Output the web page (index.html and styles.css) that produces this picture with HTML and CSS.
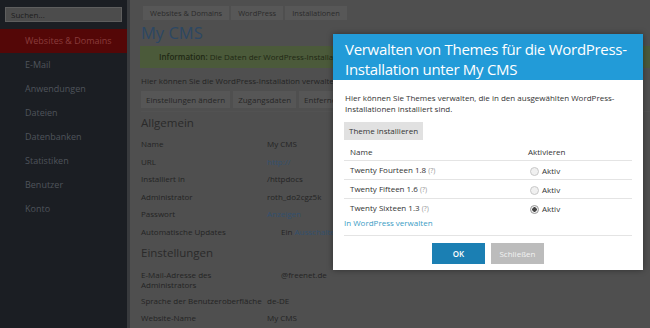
FILE: index.html
```html
<!DOCTYPE html>
<html lang="de">
<head>
  <meta charset="UTF-8">
  <title>My CMS - WordPress</title>
  <link rel="stylesheet" href="styles.css">
</head>
<body>
  <!-- Seitenleiste -->
  <aside class="sidebar">
    <div class="search">Suchen...</div>
    <ul class="nav">
      <li class="active">Websites &amp; Domains</li>
      <li>E-Mail</li>
      <li>Anwendungen</li>
      <li>Dateien</li>
      <li>Datenbanken</li>
      <li>Statistiken</li>
      <li>Benutzer</li>
      <li>Konto</li>
    </ul>
  </aside>

  <!-- Inhalt -->
  <main class="content">
    <div class="crumbs">
      <span>Websites &amp; Domains</span>
      <span>WordPress</span>
      <span>Installationen</span>
    </div>
    <h1 class="page-title">My CMS</h1>
    <div class="info"><b>Information:</b> Die Daten der WordPress-Installation wurden aktualisiert.</div>
    <p class="lead">Hier können Sie die WordPress-Installation verwalten.</p>
    <div class="tools">
      <span>Einstellungen ändern</span>
      <span>Zugangsdaten</span>
      <span>Entfernen</span>
    </div>

    <h2 class="section">Allgemein</h2>
    <div class="props">
      <div class="key">Name</div><div class="val">My CMS</div>
      <div class="key">URL</div><div class="val"><a>http://</a></div>
      <div class="key">Installiert in</div><div class="val">/httpdocs</div>
      <div class="key">Administrator</div><div class="val">roth_do2cgz5k</div>
      <div class="key">Passwort</div><div class="val"><a>Anzeigen</a></div>
      <div class="key">Automatische Updates</div><div class="val shift">Ein <a>Ausschalten</a></div>
    </div>

    <h2 class="section plain">Einstellungen</h2>
    <div class="props wide">
      <div class="key">E-Mail-Adresse des<br>Administrators</div><div class="val shift">@freenet.de</div>
      <div class="key">Sprache der Benutzeroberfläche</div><div class="val">de-DE</div>
      <div class="key">Website-Name</div><div class="val">My CMS</div>
    </div>
  </main>

  <!-- Dialog -->
  <div class="modal">
    <div class="modal-head">Verwalten von Themes für die WordPress-<br>Installation unter My CMS</div>
    <div class="modal-body">
      <p>Hier können Sie Themes verwalten, die in den ausgewählten WordPress-<br>Installationen installiert sind.</p>
      <span class="btn-grey">Theme installieren</span>
      <table class="themes">
        <tr><th>Name</th><th>Aktivieren</th></tr>
        <tr><td>Twenty Fourteen 1.8 <span class="q">(?)</span></td><td><span class="radio"></span>Aktiv</td></tr>
        <tr><td>Twenty Fifteen 1.6 <span class="q">(?)</span></td><td><span class="radio"></span>Aktiv</td></tr>
        <tr class="last"><td>Twenty Sixteen 1.3 <span class="q">(?)</span></td><td><span class="radio on"></span>Aktiv</td></tr>
      </table>
      <a class="wp-link">In WordPress verwalten</a>
      <div class="modal-foot">
        <span class="btn ok">OK</span>
        <span class="btn close">Schließen</span>
      </div>
    </div>
  </div>
</body>
</html>
```

FILE: styles.css
```css
body {
  margin: 0;
  width: 650px;
  height: 328px;
  overflow: hidden;
  display: flex;
  font-family: "Open Sans", "Noto Sans", sans-serif;
  background-color: #4f4f4f;
  color: #242424;
}

/* Seitenleiste */
.sidebar {
  width: 127px;
  flex-shrink: 0;
  background-color: #1b1e23;
  border-right: 3px solid #383a3d;
}

.search {
  margin: 7px 5px 7px 5px;
  height: 13px;
  padding-left: 5px;
  background-color: #4c4c4c;
  border: 1px solid #5e5e5e;
  font-size: 8px;
  line-height: 13px;
  color: #1c1c1c;
}

.nav {
  list-style: none;
  margin: 0;
  padding: 0;
}

.nav li {
  height: 24px;
  line-height: 24px;
  padding-left: 25px;
  font-size: 9px;
  color: #4f545b;
}

.nav li.active {
  background-color: #540707;
  color: #8a3c3c;
}

/* Inhalt */
.content {
  flex: 1;
  padding: 6px 0 0 11px;
  font-size: 8.5px;
}

.crumbs {
  display: flex;
  gap: 2px;
  margin-left: 2px;
}

.crumbs span {
  background-color: #575757;
  padding: 0 7px;
  height: 14px;
  line-height: 14px;
  font-size: 7.5px;
  color: #2b2b2b;
}

.page-title {
  margin: 2px 0 0 0;
  font-size: 16.5px;
  font-weight: normal;
  color: #2c4763;
  line-height: 22px;
}

.info {
  margin-top: 2px;
  margin-left: -1px;
  height: 22px;
  line-height: 22px;
  padding-left: 19px;
  background-color: #4b5a3a;
  color: #1f2814;
  white-space: nowrap;
  overflow: hidden;
  font-size: 8px;
}

.info b {
  font-weight: 600;
}

.lead {
  margin: 7px 0 0 0;
  line-height: 12px;
  font-size: 8px;
}

.tools {
  display: flex;
  gap: 3px;
  margin-top: 4px;
  white-space: nowrap;
}

.tools span {
  background-color: #565656;
  padding: 0 5px;
  height: 17px;
  line-height: 17px;
  font-size: 8px;
  color: #262626;
}

.section {
  margin: 3px 0 4px 0;
  padding-top: 3px;
  border-top: 1px solid #525252;
  font-size: 11.5px;
  font-weight: normal;
  line-height: 16px;
  color: #2a2a2a;
}

.section.plain {
  margin: 0 0 2px 0;
  padding-top: 4px;
  border-top: none;
}

.props {
  display: grid;
  grid-template-columns: 126px 1fr;
  font-size: 8px;
}

.props .key,
.props .val {
  line-height: 17.6px;
  white-space: nowrap;
}

.props.wide .key:first-child {
  line-height: 10px;
  padding: 7px 0 2px 0;
}

.props.wide .val:nth-child(2) {
  line-height: 10px;
  padding-top: 7px;
}

.props .val.shift {
  padding-left: 14px;
}

.props a {
  color: #33506e;
}

/* Dialog */
.modal {
  position: absolute;
  left: 333px;
  top: 34px;
  width: 310px;
  height: 236px;
  background-color: #fff;
  box-shadow: 0 0 6px rgba(0, 0, 0, 0.4);
}

.modal-head {
  background-color: #229bd8;
  color: #fff;
  font-size: 15px;
  letter-spacing: -0.3px;
  line-height: 20px;
  padding: 5px 12px 0 12px;
  height: 41px;
  white-space: nowrap;
}

.modal-body {
  padding: 12px 11px 0 11px;
  font-size: 8px;
  color: #333;
}

.modal-body p {
  margin: 0 0 0 1px;
  line-height: 11px;
}

.btn-grey {
  display: inline-block;
  margin-top: 8px;
  background-color: #e1e1e1;
  padding: 0 5px;
  height: 18px;
  line-height: 18px;
  color: #333;
}

.themes {
  width: 100%;
  border-collapse: collapse;
  margin-top: 3px;
}

.themes th,
.themes td {
  text-align: left;
  font-weight: normal;
  padding: 0 0 0 6px;
  height: 17px;
  line-height: 17px;
  border-bottom: 1px solid #e4e4e4;
}

.themes th:first-child {
  width: 172px;
}

.themes tr.last td {
  border-bottom: none;
}

.q {
  color: #999;
  font-size: 7px;
}

.radio {
  display: inline-block;
  width: 7px;
  height: 7px;
  border: 1px solid #c8c8c8;
  border-radius: 50%;
  background-color: #f0f0f0;
  vertical-align: -2px;
  margin-right: 3px;
  margin-left: 2px;
}

.radio.on {
  background: radial-gradient(circle, #444 0 2px, #f0f0f0 2.5px);
  border-color: #999;
}

.wp-link {
  display: block;
  color: #3b9cc4;
  line-height: 12px;
  padding-bottom: 6px;
  border-bottom: 1px solid #e4e4e4;
}

.modal-foot {
  display: flex;
  justify-content: center;
  gap: 6px;
  margin-top: 7px;
}

.btn {
  width: 53px;
  height: 21px;
  line-height: 21px;
  text-align: center;
  font-weight: 600;
  color: #fff;
}

.btn.ok {
  background-color: #1b7fb3;
}

.btn.close {
  background-color: #bcbcbc;
  color: #f2f2f2;
  font-weight: normal;
}
```
